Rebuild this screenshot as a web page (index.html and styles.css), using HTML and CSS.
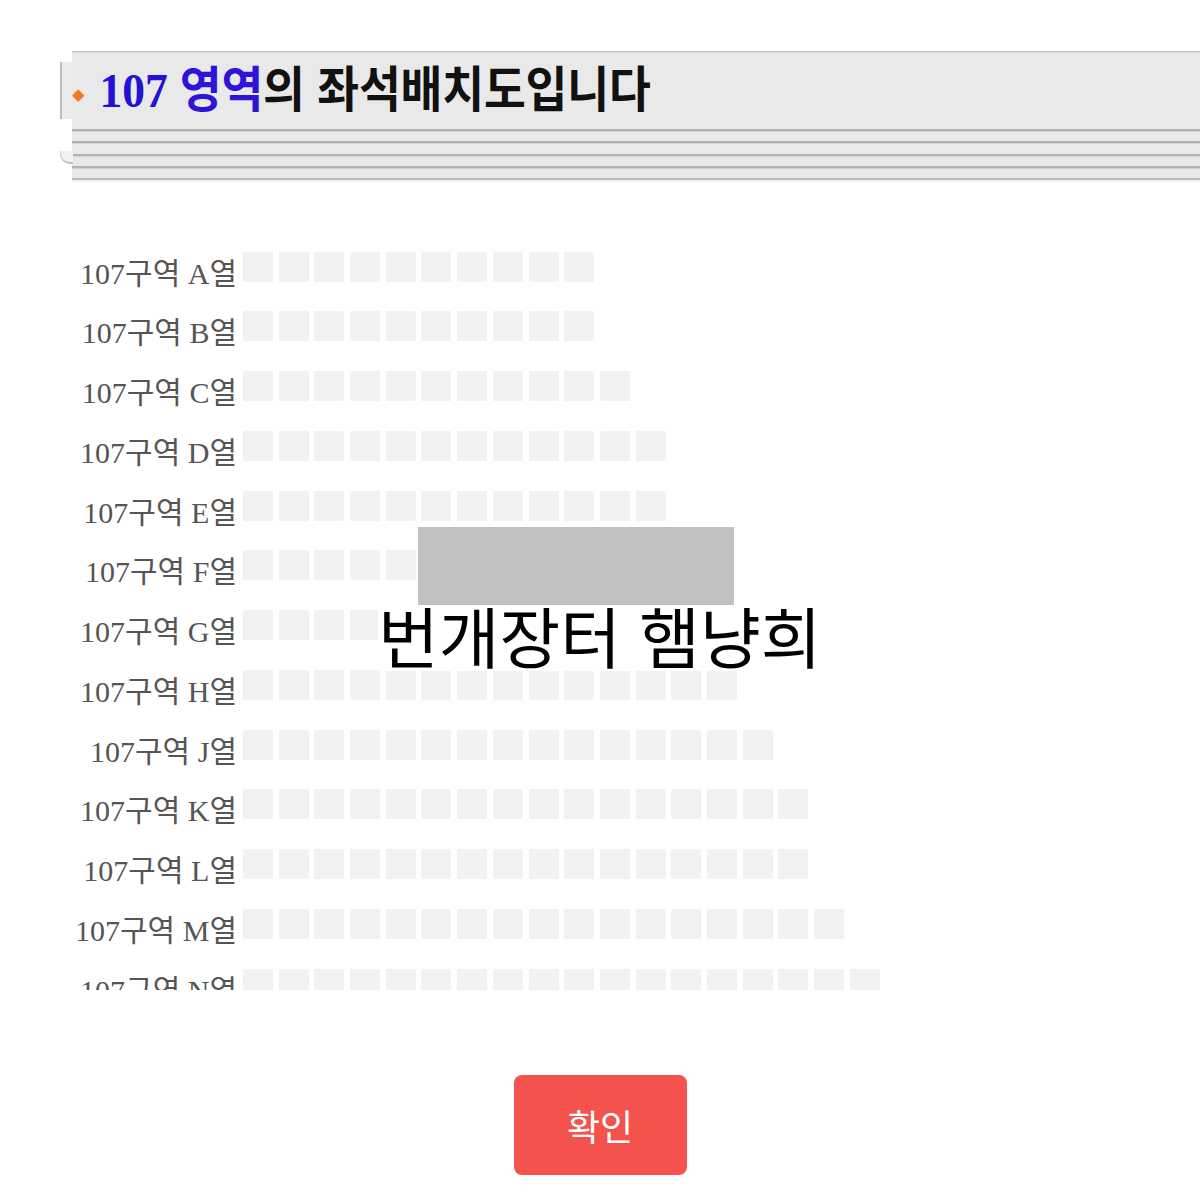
FILE: index.html
```html
<!DOCTYPE html>
<html lang="ko">
<head>
<meta charset="utf-8">
<title>107 영역 좌석배치도</title>
<link rel="stylesheet" href="styles.css">
</head>
<body>
<div class="page">
  <header class="header">
    <span class="tab"></span>
    <span class="curl"></span>
    <div class="title-bar">
      <span class="diamond"></span>
      <h1 class="title"><span class="num">107</span><span class="blue">영역</span>의 좌석배치도입니다</h1>
    </div>
    <div class="stripe"></div>
    <div class="stripe"></div>
    <div class="stripe"></div>
    <div class="stripe"></div>
    <div class="stripe last"></div>
  </header>

  <main class="seatmap">
    <div class="row"><div class="label">107구역 A열</div><div class="seats" data-n="10"></div></div>
    <div class="row"><div class="label">107구역 B열</div><div class="seats" data-n="10"></div></div>
    <div class="row"><div class="label">107구역 C열</div><div class="seats" data-n="11"></div></div>
    <div class="row"><div class="label">107구역 D열</div><div class="seats" data-n="12"></div></div>
    <div class="row"><div class="label">107구역 E열</div><div class="seats" data-n="12"></div></div>
    <div class="row"><div class="label">107구역 F열</div><div class="seats" data-n="13"></div></div>
    <div class="row"><div class="label">107구역 G열</div><div class="seats" data-n="13"></div></div>
    <div class="row"><div class="label">107구역 H열</div><div class="seats" data-n="14"></div></div>
    <div class="row"><div class="label">107구역 J열</div><div class="seats" data-n="15"></div></div>
    <div class="row"><div class="label">107구역 K열</div><div class="seats" data-n="16"></div></div>
    <div class="row"><div class="label">107구역 L열</div><div class="seats" data-n="16"></div></div>
    <div class="row"><div class="label">107구역 M열</div><div class="seats" data-n="17"></div></div>
    <div class="row"><div class="label">107구역 N열</div><div class="seats" data-n="18"></div></div>
  </main>

  <div class="redact"></div>
  <div class="watermark">번개장터 햄냥희</div>

  <div class="actions">
    <button class="confirm" type="button">확인</button>
  </div>
</div>
<script src="app.js"></script>
</body>
</html>
```

FILE: app.js
```js
document.querySelectorAll('.seats').forEach(function (el) {
  var n = parseInt(el.getAttribute('data-n'), 10);
  for (var i = 0; i < n; i++) {
    var s = document.createElement('span');
    s.className = 'seat';
    el.appendChild(s);
  }
});
```

FILE: styles.css
```css
html, body {
  margin: 0;
  padding: 0;
  background: #ffffff;
}

.page {
  position: relative;
  width: 1200px;
  height: 1200px;
  padding-top: 51px;
  box-sizing: border-box;
  font-family: "Noto Sans CJK KR", "Noto Sans", sans-serif;
}

/* ---------- header ---------- */
.header {
  position: relative;
  margin-left: 72px;
}

.tab {
  position: absolute;
  left: -12px;
  top: 11px;
  width: 10px;
  height: 57px;
  background: #ececec;
  border-left: 2px solid #bdbdbd;
}

.curl {
  position: absolute;
  left: -12px;
  top: 100px;
  width: 12px;
  height: 11px;
  border-left: 1px solid #d0d0d0;
  border-bottom: 2px solid #bdbdbd;
  border-bottom-left-radius: 10px;
  background: #f2f2f2;
}

.title-bar {
  height: 77px;
  background: #e9e9e9;
  border-top: 1px solid #c6c6c6;
  box-shadow: inset 0 1px 0 #dcdcdc;
  display: flex;
  align-items: center;
}

.diamond {
  width: 8.5px;
  height: 8.5px;
  margin-left: 2px;
  margin-right: 17px;
  margin-top: 10px;
  background: #f07a2a;
  transform: rotate(45deg);
  border-radius: 1px;
  flex-shrink: 0;
}

.title {
  margin: 0 0 4px 0;
  font-family: "Noto Sans CJK KR", sans-serif;
  font-weight: 700;
  font-size: 45.5px;
  line-height: 1;
  color: #111111;
  letter-spacing: -0.2px;
  transform: scaleY(1.08);
  transform-origin: left center;
  white-space: nowrap;
}

.title .num {
  font-family: "Liberation Serif", serif;
  color: #2411d4;
  margin-right: 12px;
  letter-spacing: 0;
}

.title .blue {
  color: #2f14d8;
}

.stripe {
  height: 9px;
  background: #e9e9e9;
  border-top: 2px solid #b2b2b2;
  box-shadow: inset 0 1px 0 #d2d2d2;
  padding-top: 1px;
}

.stripe:nth-child(5) {
  height: 9.5px;
}

.stripe.last {
  height: 2px;
  padding-top: 0;
  background: #f0f0f0;
  box-shadow: none;
  border-top: 2px solid #b8b8b8;
}

/* ---------- seat map ---------- */
.seatmap {
  margin-top: 70px;
  height: 738px;
  overflow: hidden;
  display: flex;
  flex-direction: column;
}

.row {
  display: flex;
  align-items: flex-start;
  height: 59.75px;
  flex-shrink: 0;
}

.label {
  width: 237px;
  flex-shrink: 0;
  text-align: right;
  font-family: "Liberation Serif", "Noto Sans CJK KR", serif;
  font-weight: 400;
  font-size: 30px;
  line-height: 30px;
  padding-top: 7px;
  color: #555555;
  white-space: nowrap;
}

.seats {
  display: flex;
  gap: 5.7px;
  margin-left: 6px;
}

.seat {
  display: block;
  width: 30px;
  height: 30px;
  background: #f2f2f2;
  border-radius: 1px;
}

/* ---------- overlays ---------- */
.redact {
  position: absolute;
  left: 418px;
  top: 527px;
  width: 316px;
  height: 78px;
  background: #c1c1c1;
}

.watermark {
  position: absolute;
  left: 378px;
  top: 605px;
  width: 447px;
  height: 66px;
  background: #ffffff;
  font-family: "Noto Sans CJK KR", sans-serif;
  font-weight: 400;
  font-size: 66px;
  line-height: 58px;
  color: #000000;
  white-space: nowrap;
}

/* ---------- actions ---------- */
.actions {
  display: flex;
  justify-content: center;
  margin-top: 85px;
}

.confirm {
  width: 173px;
  height: 100px;
  border: none;
  border-radius: 8px;
  background: #f4524d;
  color: #ffffff;
  font-family: "Noto Sans CJK KR", sans-serif;
  font-size: 36px;
  font-weight: 400;
  padding: 0;
}
```
